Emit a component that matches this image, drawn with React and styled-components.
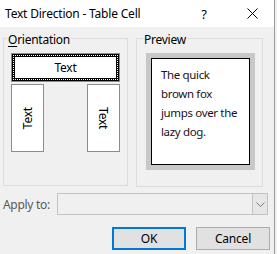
import styled, { createGlobalStyle } from "styled-components";

const GlobalStyle = createGlobalStyle`
  html, body {
    margin: 0;
    padding: 0;
    background: #f0f0f0;
  }
  body {
    font-family: "Noto Sans", "Segoe UI", sans-serif;
    font-size: 12px;
    color: #000;
  }
`;

const Dialog = styled.div`
  width: 274px;
  height: 254px;
  background: #f0f0f0;
  border-right: 1px solid #9a9a9a;
  display: flex;
  flex-direction: column;
`;

const TitleBar = styled.div`
  height: 27px;
  background: #fff;
  display: flex;
  align-items: center;
  padding-left: 5px;
`;

const Title = styled.div`
  flex: 1;
  font-size: 12px;
  letter-spacing: -0.2px;
  color: #000;
`;

const HelpBtn = styled.div`
  width: 12px;
  font-size: 13px;
  text-align: center;
  margin-right: 36px;
`;

const CloseBtn = styled.div`
  width: 12px;
  height: 12px;
  margin-right: 16px;
  display: flex;
  align-items: center;
  justify-content: center;
`;

const Body = styled.div`
  display: flex;
  flex-direction: column;
  padding: 3px 0 0 3px;
`;

const Groups = styled.div`
  display: flex;
  align-items: flex-start;
  gap: 8px;
`;

const Group = styled.fieldset`
  width: ${(p) => p.$w}px;
  height: ${(p) => p.$h}px;
  box-sizing: border-box;
  margin: 0;
  padding: 0;
  border: 1px solid #dcdcdc;
  min-width: 0;
`;

const Legend = styled.legend`
  padding: 3px 1px 0 1px;
  margin-left: ${(p) => p.$ml}px;
  line-height: 14px;
  letter-spacing: -0.25px;
  u {
    text-decoration: underline;
    text-underline-offset: 2px;
  }
`;

const GroupContent = styled.div`
  padding: 6px 0 0 ${(p) => p.$pad}px;
`;

const OrientGrid = styled.div`
  display: flex;
  flex-direction: column;
  gap: 2px;
`;

const WideOption = styled.div`
  width: 109px;
  height: 29px;
  box-sizing: border-box;
  border: 1px solid #8c8c8c;
  background: #fff;
`;

const FocusRing = styled.div`
  height: 100%;
  box-sizing: border-box;
  border: 3px solid #000;
  outline: 1px dotted #fff;
  outline-offset: -2px;
  display: flex;
  align-items: center;
  justify-content: center;
  letter-spacing: -0.2px;
`;

const TallRow = styled.div`
  display: flex;
  justify-content: space-between;
  width: 109px;
`;

const TallOption = styled.div`
  width: 33px;
  height: 68px;
  box-sizing: border-box;
  border: 1px solid #8c8c8c;
  background: #fff;
  display: flex;
  align-items: center;
  justify-content: center;
`;

const TallText = styled.span`
  writing-mode: vertical-rl;
  transform: ${(p) => (p.$up ? "rotate(180deg)" : "none")};
  letter-spacing: -0.2px;
`;

const PreviewFrame = styled.div`
  width: 109px;
  height: 117px;
  box-sizing: border-box;
  background: #c8c8c8;
  padding: 5px;
`;

const PreviewPage = styled.div`
  height: 100%;
  box-sizing: border-box;
  background: #fff;
  border: 1px solid #000;
  padding: 6px 0 0 9px;
  font-size: 11.5px;
  line-height: 19px;
  color: #1b1020;
  letter-spacing: -0.35px;
  white-space: nowrap;
`;

const ApplyRow = styled.div`
  display: flex;
  align-items: center;
  margin-top: 6px;
`;

const ApplyLabel = styled.div`
  width: 54px;
  color: #5a5a5a;
  letter-spacing: -0.3px;
`;

const Combo = styled.div`
  width: 211px;
  height: 22px;
  box-sizing: border-box;
  border: 1px solid #c3c3c3;
  background: #f0f0f0;
  display: flex;
  justify-content: flex-end;
`;

const ComboArrow = styled.div`
  width: 15px;
  height: 100%;
  box-sizing: border-box;
  border-left: 1px solid #c3c3c3;
  background: #e6e6e6;
  display: flex;
  align-items: center;
  justify-content: center;
`;

const Buttons = styled.div`
  display: flex;
  justify-content: flex-end;
  gap: 10px;
  margin-top: 12px;
  padding-right: 4px;
`;

const Button = styled.button`
  width: 74px;
  height: 23px;
  box-sizing: border-box;
  background: #e1e1e1;
  border: ${(p) => (p.$primary ? "2px solid #0078d7" : "1px solid #adadad")};
  font-family: "Noto Sans", "Segoe UI", sans-serif;
  font-size: 12px;
  letter-spacing: -0.2px;
  color: #000;
  padding: 0;
`;

export default function App() {
  return (
    <>
      <GlobalStyle />
      <Dialog>
        <TitleBar>
          <Title>Text Direction - Table Cell</Title>
          <HelpBtn>?</HelpBtn>
          <CloseBtn>
            <svg width="11" height="11" viewBox="0 0 11 11">
              <path d="M0.5 0.5 L10.5 10.5 M10.5 0.5 L0.5 10.5" stroke="#000" strokeWidth="1" />
            </svg>
          </CloseBtn>
        </TitleBar>
        <Body>
          <Groups>
            <Group $w={125} $h={156}>
              <Legend $ml={3}>
                <u>O</u>rientation
              </Legend>
              <GroupContent $pad={7}>
                <OrientGrid>
                  <WideOption>
                    <FocusRing>Text</FocusRing>
                  </WideOption>
                  <TallRow>
                    <TallOption>
                      <TallText $up>Text</TallText>
                    </TallOption>
                    <TallOption>
                      <TallText>Text</TallText>
                    </TallOption>
                  </TallRow>
                </OrientGrid>
              </GroupContent>
            </Group>
            <Group $w={127} $h={157}>
              <Legend $ml={6}>Preview</Legend>
              <GroupContent $pad={9}>
                <PreviewFrame>
                  <PreviewPage>
                    The quick
                    <br />
                    brown fox
                    <br />
                    jumps over the
                    <br />
                    lazy dog.
                  </PreviewPage>
                </PreviewFrame>
              </GroupContent>
            </Group>
          </Groups>
          <ApplyRow>
            <ApplyLabel>Apply to:</ApplyLabel>
            <Combo>
              <ComboArrow>
                <svg width="9" height="5" viewBox="0 0 9 5">
                  <path d="M0.5 0.5 L4.5 4.5 L8.5 0.5" fill="none" stroke="#7a7a7a" strokeWidth="1" />
                </svg>
              </ComboArrow>
            </Combo>
          </ApplyRow>
          <Buttons>
            <Button $primary>OK</Button>
            <Button>Cancel</Button>
          </Buttons>
        </Body>
      </Dialog>
    </>
  );
}
